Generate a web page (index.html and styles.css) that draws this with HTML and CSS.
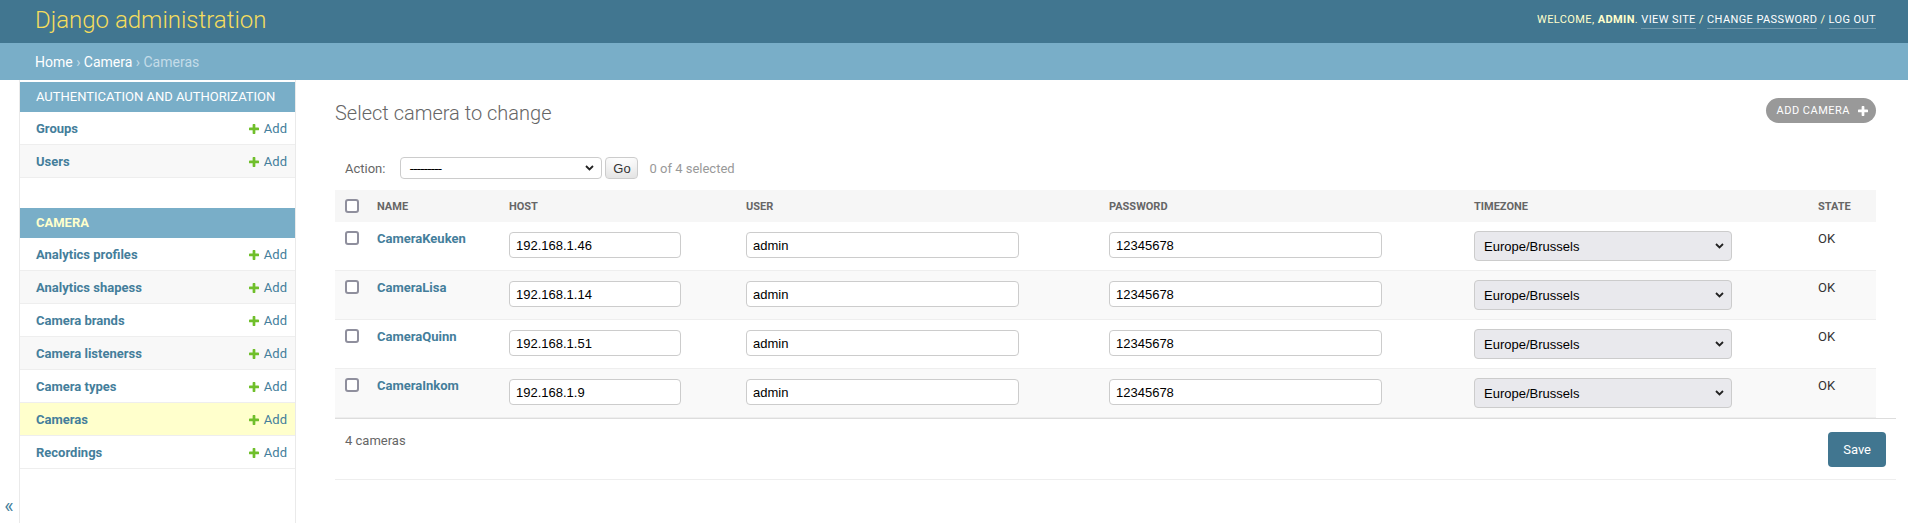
FILE: index.html
```html
<!DOCTYPE html>
<html lang="en">
<head>
<meta charset="utf-8">
<title>Select camera to change | Django site admin</title>
<link rel="stylesheet" href="styles.css">
</head>
<body>
<header class="header">
  <h1 class="branding">Django administration</h1>
  <div class="user-tools">Welcome, <strong>admin</strong>. <a href="#">View site</a> / <a href="#">Change password</a> / <a href="#">Log out</a></div>
</header>
<nav class="breadcrumbs"><a href="#">Home</a> › <a href="#">Camera</a> › Cameras</nav>
<div class="main">
  <button class="toggle-nav" type="button">«</button>
  <aside class="sidebar">
    <div class="module">
      <div class="module-caption">Authentication and Authorization</div>
      <div class="rows">
        <div class="nav-row"><a class="nav-name" href="#">Groups</a><a class="addlink" href="#"><svg width="10" height="10" viewBox="192 192 1408 1408"><path fill="#70bf2b" d="M1600 796v192q0 40-28 68t-68 28h-416v416q0 40-28 68t-68 28h-192q-40 0-68-28t-28-68v-416h-416q-40 0-68-28t-28-68v-192q0-40 28-68t68-28h416v-416q0-40 28-68t68-28h192q40 0 68 28t28 68v416h416q40 0 68 28t28 68z"/></svg>Add</a></div>
        <div class="nav-row"><a class="nav-name" href="#">Users</a><a class="addlink" href="#"><svg width="10" height="10" viewBox="192 192 1408 1408"><path fill="#70bf2b" d="M1600 796v192q0 40-28 68t-68 28h-416v416q0 40-28 68t-68 28h-192q-40 0-68-28t-28-68v-416h-416q-40 0-68-28t-28-68v-192q0-40 28-68t68-28h416v-416q0-40 28-68t68-28h192q40 0 68 28t28 68v416h416q40 0 68 28t28 68z"/></svg>Add</a></div>
      </div>
    </div>
    <div class="module">
      <div class="module-caption current">Camera</div>
      <div class="rows">
        <div class="nav-row"><a class="nav-name" href="#">Analytics profiles</a><a class="addlink" href="#"><svg width="10" height="10" viewBox="192 192 1408 1408"><path fill="#70bf2b" d="M1600 796v192q0 40-28 68t-68 28h-416v416q0 40-28 68t-68 28h-192q-40 0-68-28t-28-68v-416h-416q-40 0-68-28t-28-68v-192q0-40 28-68t68-28h416v-416q0-40 28-68t68-28h192q40 0 68 28t28 68v416h416q40 0 68 28t28 68z"/></svg>Add</a></div>
        <div class="nav-row"><a class="nav-name" href="#">Analytics shapess</a><a class="addlink" href="#"><svg width="10" height="10" viewBox="192 192 1408 1408"><path fill="#70bf2b" d="M1600 796v192q0 40-28 68t-68 28h-416v416q0 40-28 68t-68 28h-192q-40 0-68-28t-28-68v-416h-416q-40 0-68-28t-28-68v-192q0-40 28-68t68-28h416v-416q0-40 28-68t68-28h192q40 0 68 28t28 68v416h416q40 0 68 28t28 68z"/></svg>Add</a></div>
        <div class="nav-row"><a class="nav-name" href="#">Camera brands</a><a class="addlink" href="#"><svg width="10" height="10" viewBox="192 192 1408 1408"><path fill="#70bf2b" d="M1600 796v192q0 40-28 68t-68 28h-416v416q0 40-28 68t-68 28h-192q-40 0-68-28t-28-68v-416h-416q-40 0-68-28t-28-68v-192q0-40 28-68t68-28h416v-416q0-40 28-68t68-28h192q40 0 68 28t28 68v416h416q40 0 68 28t28 68z"/></svg>Add</a></div>
        <div class="nav-row"><a class="nav-name" href="#">Camera listenerss</a><a class="addlink" href="#"><svg width="10" height="10" viewBox="192 192 1408 1408"><path fill="#70bf2b" d="M1600 796v192q0 40-28 68t-68 28h-416v416q0 40-28 68t-68 28h-192q-40 0-68-28t-28-68v-416h-416q-40 0-68-28t-28-68v-192q0-40 28-68t68-28h416v-416q0-40 28-68t68-28h192q40 0 68 28t28 68v416h416q40 0 68 28t28 68z"/></svg>Add</a></div>
        <div class="nav-row"><a class="nav-name" href="#">Camera types</a><a class="addlink" href="#"><svg width="10" height="10" viewBox="192 192 1408 1408"><path fill="#70bf2b" d="M1600 796v192q0 40-28 68t-68 28h-416v416q0 40-28 68t-68 28h-192q-40 0-68-28t-28-68v-416h-416q-40 0-68-28t-28-68v-192q0-40 28-68t68-28h416v-416q0-40 28-68t68-28h192q40 0 68 28t28 68v416h416q40 0 68 28t28 68z"/></svg>Add</a></div>
        <div class="nav-row selected"><a class="nav-name" href="#">Cameras</a><a class="addlink" href="#"><svg width="10" height="10" viewBox="192 192 1408 1408"><path fill="#70bf2b" d="M1600 796v192q0 40-28 68t-68 28h-416v416q0 40-28 68t-68 28h-192q-40 0-68-28t-28-68v-416h-416q-40 0-68-28t-28-68v-192q0-40 28-68t68-28h416v-416q0-40 28-68t68-28h192q40 0 68 28t28 68v416h416q40 0 68 28t28 68z"/></svg>Add</a></div>
        <div class="nav-row"><a class="nav-name" href="#">Recordings</a><a class="addlink" href="#"><svg width="10" height="10" viewBox="192 192 1408 1408"><path fill="#70bf2b" d="M1600 796v192q0 40-28 68t-68 28h-416v416q0 40-28 68t-68 28h-192q-40 0-68-28t-28-68v-416h-416q-40 0-68-28t-28-68v-192q0-40 28-68t68-28h416v-416q0-40 28-68t68-28h192q40 0 68 28t28 68v416h416q40 0 68 28t28 68z"/></svg>Add</a></div>
      </div>
    </div>
  </aside>
  <main class="content">
    <div class="title-row">
      <h1 class="page-title">Select camera to change</h1>
      <a class="add-btn" href="#">Add camera<svg width="10" height="10" viewBox="192 192 1408 1408"><path fill="#fff" d="M1600 796v192q0 40-28 68t-68 28h-416v416q0 40-28 68t-68 28h-192q-40 0-68-28t-28-68v-416h-416q-40 0-68-28t-28-68v-192q0-40 28-68t68-28h416v-416q0-40 28-68t68-28h192q40 0 68 28t28 68v416h416q40 0 68 28t28 68z"/></svg></a>
    </div>
    <form class="changelist">
      <div class="actions">
        <label class="action-label">Action:</label>
        <span class="select-wrap action-select-wrap">
          <select class="action-select"><option>---------</option></select>
          <svg class="chev" width="9" height="6" viewBox="0 0 9 6"><path d="M1 1l3.5 3.5L8 1" fill="none" stroke="#222" stroke-width="1.8"/></svg>
        </span>
        <button class="go" type="button">Go</button>
        <span class="counter">0 of 4 selected</span>
      </div>
      <table class="results">
        <thead>
          <tr>
            <th class="c-check"><input class="cb" type="checkbox"></th>
            <th class="c-name">Name</th>
            <th class="c-host">Host</th>
            <th class="c-user">User</th>
            <th class="c-pass">Password</th>
            <th class="c-tz">Timezone</th>
            <th class="c-state">State</th>
          </tr>
        </thead>
        <tbody>
          <tr>
            <td class="c-check"><input class="cb" type="checkbox"></td>
            <td><a class="obj-link" href="#">CameraKeuken</a></td>
            <td><input class="field host" type="text" value="192.168.1.46"></td>
            <td><input class="field wide" type="text" value="admin"></td>
            <td><input class="field wide" type="text" value="12345678"></td>
            <td><span class="select-wrap"><select class="tz"><option>Europe/Brussels</option></select><svg class="chev" width="9" height="6" viewBox="0 0 9 6"><path d="M1 1l3.5 3.5L8 1" fill="none" stroke="#222" stroke-width="1.8"/></svg></span></td>
            <td>OK</td>
          </tr>
          <tr>
            <td class="c-check"><input class="cb" type="checkbox"></td>
            <td><a class="obj-link" href="#">CameraLisa</a></td>
            <td><input class="field host" type="text" value="192.168.1.14"></td>
            <td><input class="field wide" type="text" value="admin"></td>
            <td><input class="field wide" type="text" value="12345678"></td>
            <td><span class="select-wrap"><select class="tz"><option>Europe/Brussels</option></select><svg class="chev" width="9" height="6" viewBox="0 0 9 6"><path d="M1 1l3.5 3.5L8 1" fill="none" stroke="#222" stroke-width="1.8"/></svg></span></td>
            <td>OK</td>
          </tr>
          <tr>
            <td class="c-check"><input class="cb" type="checkbox"></td>
            <td><a class="obj-link" href="#">CameraQuinn</a></td>
            <td><input class="field host" type="text" value="192.168.1.51"></td>
            <td><input class="field wide" type="text" value="admin"></td>
            <td><input class="field wide" type="text" value="12345678"></td>
            <td><span class="select-wrap"><select class="tz"><option>Europe/Brussels</option></select><svg class="chev" width="9" height="6" viewBox="0 0 9 6"><path d="M1 1l3.5 3.5L8 1" fill="none" stroke="#222" stroke-width="1.8"/></svg></span></td>
            <td>OK</td>
          </tr>
          <tr>
            <td class="c-check"><input class="cb" type="checkbox"></td>
            <td><a class="obj-link" href="#">CameraInkom</a></td>
            <td><input class="field host" type="text" value="192.168.1.9"></td>
            <td><input class="field wide" type="text" value="admin"></td>
            <td><input class="field wide" type="text" value="12345678"></td>
            <td><span class="select-wrap"><select class="tz"><option>Europe/Brussels</option></select><svg class="chev" width="9" height="6" viewBox="0 0 9 6"><path d="M1 1l3.5 3.5L8 1" fill="none" stroke="#222" stroke-width="1.8"/></svg></span></td>
            <td>OK</td>
          </tr>
        </tbody>
      </table>
      <div class="paginator">
        <span>4 cameras</span>
        <button class="save" type="button">Save</button>
      </div>
    </form>
  </main>
</div>
</body>
</html>
```
FILE: styles.css
```css
* { box-sizing: border-box; }
html, body { margin: 0; padding: 0; }
body {
  font-family: Roboto, "Liberation Sans", Arial, sans-serif;
  font-size: 14px;
  color: #333;
  background: #fff;
}
a { text-decoration: none; color: #447e9b; }

/* header */
.header {
  height: 43px;
  background: #417690;
  color: #ffc;
  display: flex;
  justify-content: space-between;
  align-items: flex-start;
  padding: 6px 32px 0 35px;
}
.branding {
  margin: 0;
  font-size: 24px;
  font-weight: 300;
  line-height: 28px;
  color: #f5dd5d;
}
.user-tools {
  margin-top: 7px;
  font-size: 11px;
  font-weight: 400;
  line-height: 13px;
  letter-spacing: 0.4px;
  text-transform: uppercase;
}
.user-tools strong { font-weight: 700; }
.user-tools a {
  color: #fff;
  border-bottom: 1px solid rgba(255, 255, 255, 0.25);
  padding-bottom: 2px;
}

.breadcrumbs {
  background: #79aec8;
  color: #c4dce8;
  font-size: 14px;
  line-height: 16px;
  padding: 11px 35px 10px;
}
.breadcrumbs a { color: #fff; }

/* main */
.main {
  display: flex;
  min-height: calc(100vh - 80px);
}
.toggle-nav {
  flex: 0 0 20px;
  width: 20px;
  border: 0;
  border-right: 1px solid #eaeaea;
  background: #fff;
  color: #447e9b;
  font-family: Roboto, sans-serif;
  font-size: 20px;
  line-height: 23px;
  padding: 0 1px 5px 0;
  display: flex;
  align-items: flex-end;
  justify-content: center;
}

.sidebar {
  flex: 0 0 276px;
  border-right: 1px solid #eaeaea;
  padding-top: 2px;
}
.module { margin-bottom: 30px; }
.module-caption {
  background: #79aec8;
  color: #fff;
  font-size: 13px;
  line-height: 14px;
  padding: 8px 16px;
  text-transform: uppercase;
}
.module-caption.current { color: #ffc; font-weight: 700; }
.nav-row {
  display: flex;
  justify-content: space-between;
  align-items: center;
  border-bottom: 1px solid #eee;
  font-size: 13px;
  line-height: 16px;
  padding: 9px 8px 7px 16px;
  background: #fff;
}
.nav-row:nth-child(even) { background: #f8f8f8; }
.nav-row.selected { background: #ffc; }
.nav-name { font-weight: 700; }
.addlink {
  display: flex;
  align-items: center;
  gap: 5px;
  white-space: nowrap;
}

/* content */
.content {
  flex: 1;
  min-width: 0;
  padding: 21px 32px 20px 39px;
}
.title-row {
  display: flex;
  justify-content: space-between;
  align-items: flex-start;
  margin-bottom: 20px;
}
.page-title {
  margin: 0;
  font-size: 20px;
  font-weight: 300;
  line-height: 24px;
  color: #666;
}
.add-btn {
  margin-top: -3px;
  display: flex;
  align-items: center;
  gap: 8px;
  background: #999;
  color: #fff;
  border-radius: 15px;
  padding: 6px 8px 6px 11px;
  font-size: 11px;
  line-height: 13px;
  letter-spacing: 0.5px;
  text-transform: uppercase;
}

.actions {
  display: flex;
  align-items: center;
  height: 45px;
  padding: 11px 10px 10px;
  font-size: 13px;
  color: #999;
}
.action-label { color: #666; }
.select-wrap {
  position: relative;
  display: inline-block;
}
.select-wrap .chev {
  position: absolute;
  right: 8px;
  top: 50%;
  margin-top: -3px;
  pointer-events: none;
}
.action-select-wrap { margin-left: 15px; }
.action-select {
  display: block;
  appearance: none;
  -webkit-appearance: none;
  width: 202px;
  height: 22px;
  border: 1px solid #ccc;
  border-radius: 4px;
  background: #fff;
  color: #000;
  font-family: "DejaVu Sans", sans-serif;
  font-size: 13px;
  letter-spacing: -1.2px;
  padding: 0 0 0 8px;
  margin: 0;
}
.go {
  margin-left: 3px;
  width: 33px;
  height: 22px;
  border: 1px solid #ccc;
  border-radius: 4px;
  background: #fff;
  box-shadow: 0 -15px 20px -10px rgba(0, 0, 0, 0.15) inset;
  color: #333;
  font-family: "Liberation Sans", Arial, sans-serif;
  font-size: 13px;
  padding: 0;
}
.counter { margin-left: 11px; }

/* results table */
.results {
  width: 100%;
  table-layout: fixed;
  border-collapse: separate;
  border-spacing: 0;
}
.results th {
  height: 32px;
  background: #f6f6f6;
  padding: 0 8px;
  text-align: left;
  vertical-align: middle;
  font-size: 11px;
  font-weight: 700;
  color: #666;
  text-transform: uppercase;
  white-space: nowrap;
}
.c-check { width: 34px; }
.c-name { width: 132px; }
.c-host { width: 237px; }
.c-user { width: 363px; }
.c-pass { width: 365px; }
.c-tz { width: 344px; }
.c-state { width: 66px; }
.results th.c-check,
.results td.c-check { padding-left: 0; padding-right: 0; }
.cb {
  appearance: none;
  -webkit-appearance: none;
  display: block;
  width: 14px;
  height: 14px;
  margin: 0 auto;
  border: 2px solid #8f8f9d;
  border-radius: 3px;
  background: #fff;
}
.results td {
  padding: 9px 8px;
  border-bottom: 1px solid #eee;
  vertical-align: top;
  font-size: 13px;
  line-height: 16px;
  color: #333;
  background: #fff;
}
.results tbody tr:nth-child(even) td { background: #f9f9f9; }
.obj-link { font-weight: 700; }
.field {
  display: block;
  height: 26px;
  margin: 1px 0 0;
  border: 1px solid #ccc;
  border-radius: 4px;
  padding: 0 6px;
  background: #fff;
  color: #000;
  font-family: "Liberation Sans", Arial, sans-serif;
  font-size: 13px;
}
.field.host { width: 172px; }
.field.wide { width: 273px; }
.tz {
  display: block;
  appearance: none;
  -webkit-appearance: none;
  width: 258px;
  height: 30px;
  margin: 0;
  border: 1px solid #ccc;
  border-radius: 4px;
  background: #e9e9ed;
  color: #000;
  padding: 0 0 0 9px;
  font-family: "Liberation Sans", Arial, sans-serif;
  font-size: 13px;
}
.tz + .chev { right: 8px; }

.paginator {
  display: flex;
  justify-content: space-between;
  align-items: flex-start;
  margin-right: -20px;
  padding: 11px 10px 10px;
  border-top: 1px solid #ddd;
  border-bottom: 1px solid #eee;
  font-size: 13px;
  line-height: 22px;
  color: #666;
}
.save {
  margin: 2px 0;
  height: 35px;
  padding: 0 15px;
  border: 0;
  border-radius: 4px;
  background: #417690;
  color: #fff;
  font-family: Roboto, sans-serif;
  font-size: 13px;
}
```
